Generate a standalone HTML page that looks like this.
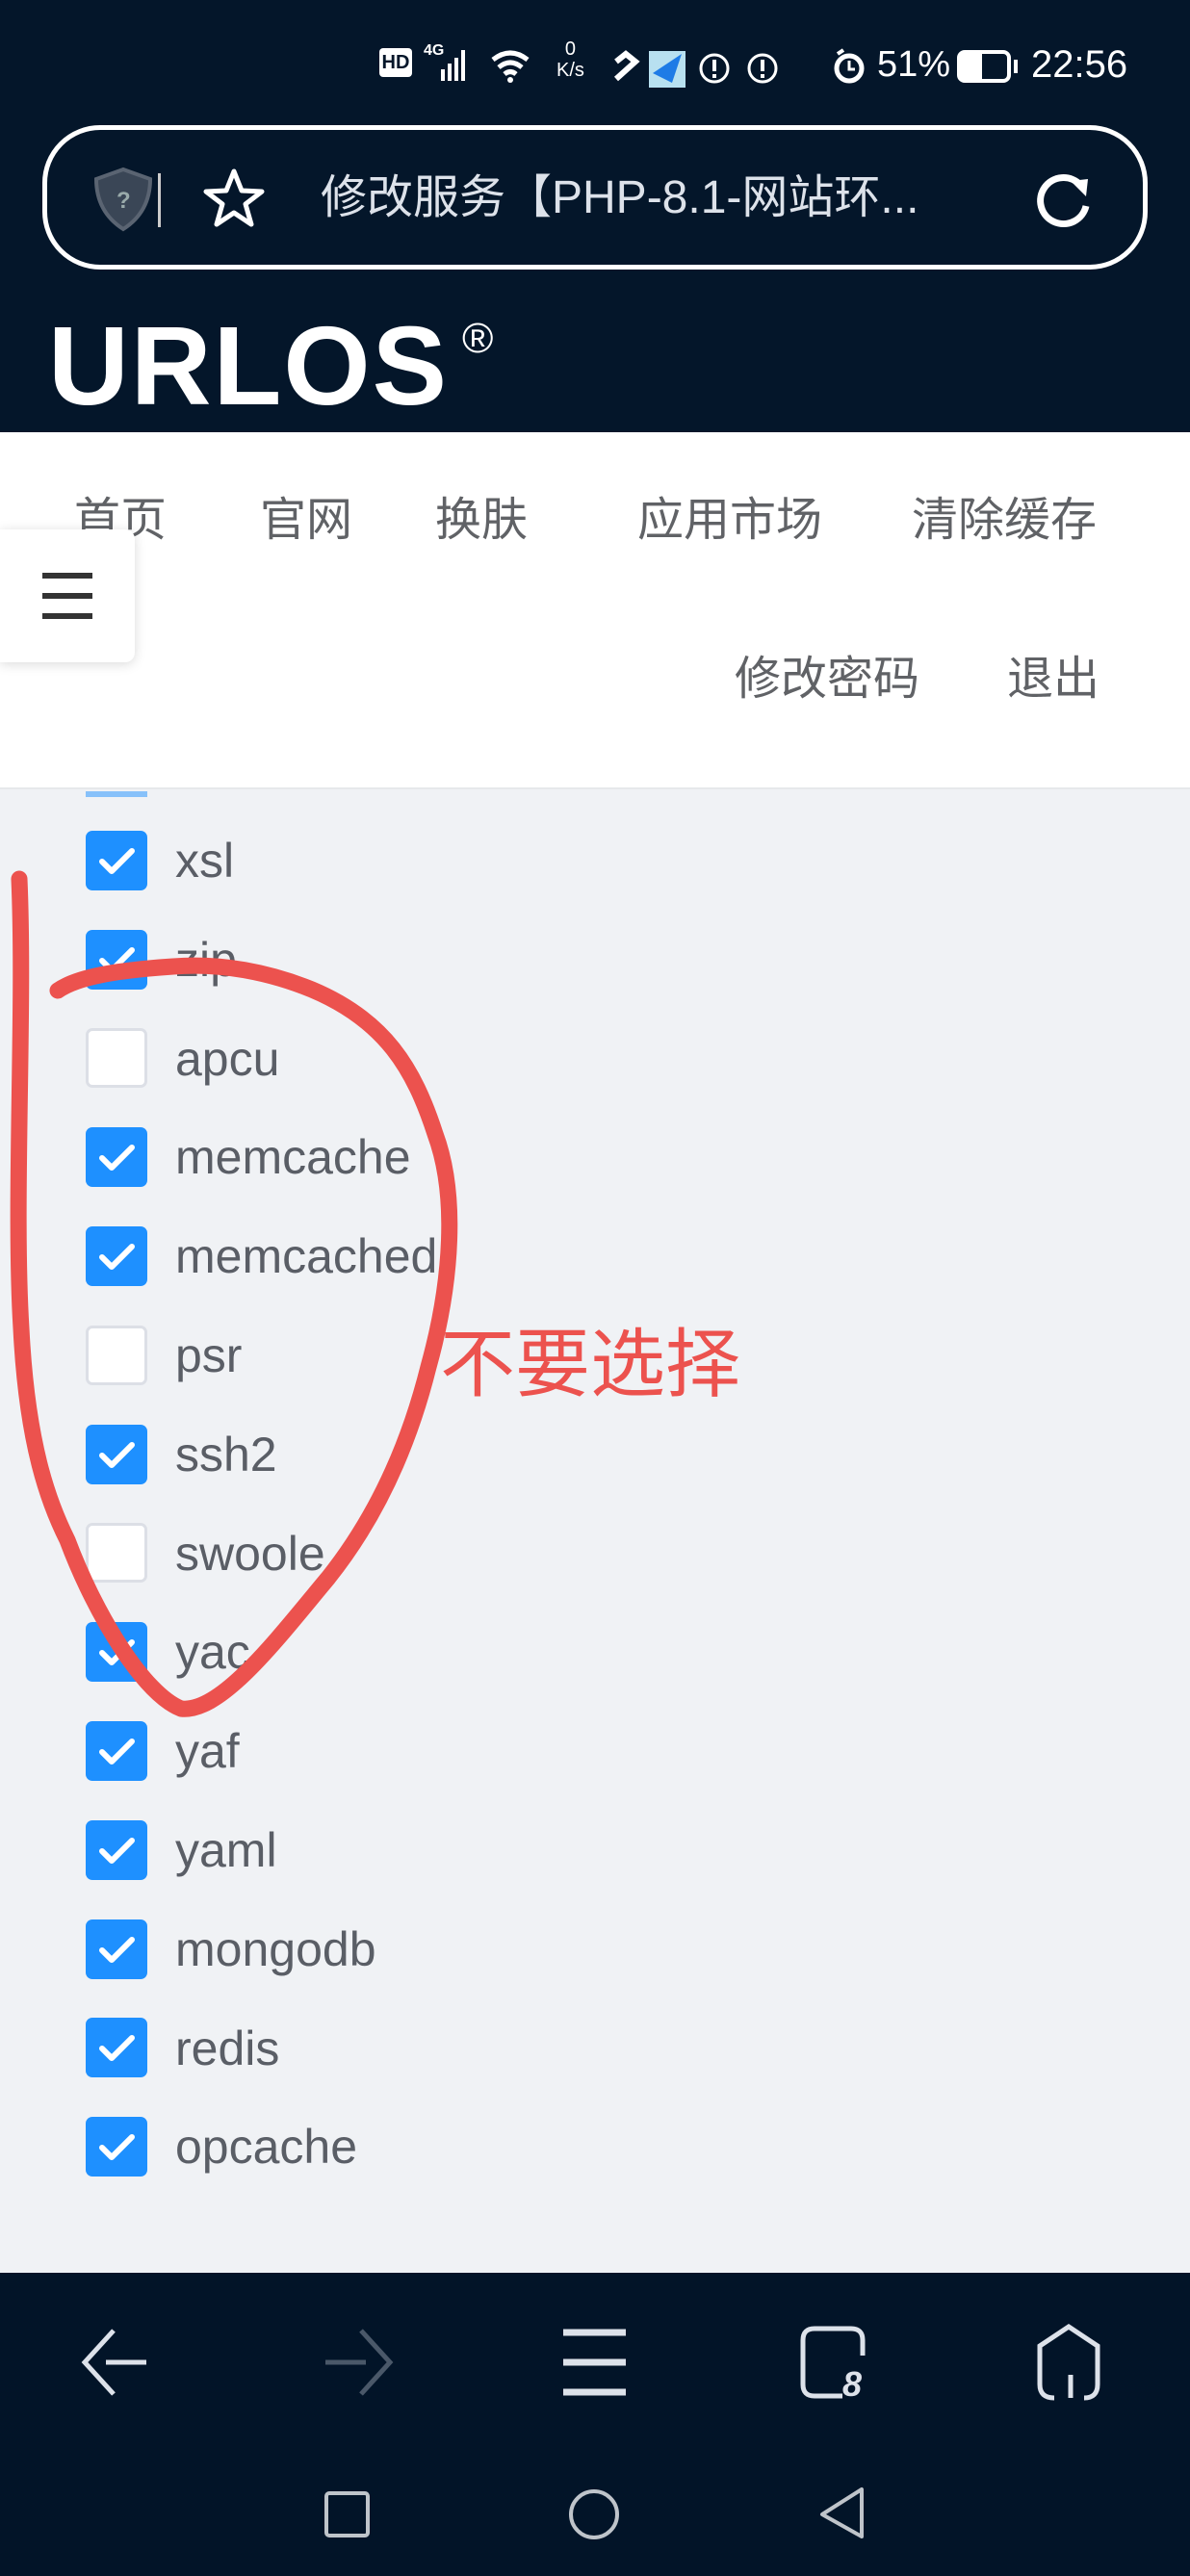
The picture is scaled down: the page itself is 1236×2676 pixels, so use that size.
<!DOCTYPE html>
<html><head><meta charset="utf-8"><style>
*{margin:0;padding:0;box-sizing:border-box}
body{width:1236px;height:2676px;position:relative;overflow:hidden;background:#f0f2f5;font-family:"Liberation Sans","Noto Sans CJK SC",sans-serif}
.abs{position:absolute}
.dark{background:#04162a}
.nav{position:absolute;font-size:48px;color:#606266;line-height:1;white-space:nowrap}
.cb{position:absolute;left:89px;width:64px;height:62px;border-radius:7px;background:#1e90ff}
.cb.off{background:#fff;border:3px solid #dcdfe6}
.lbl{position:absolute;left:182px;font-size:50px;color:#5a5e66;line-height:1}
</style></head><body>
<div class="abs dark" style="left:0;top:0;width:1236px;height:449px"></div>
<!-- status bar -->
<div class="abs" style="left:394px;top:50px;width:34px;height:30px;border-radius:4px;background:#fff;color:#04162a;font-size:20px;font-weight:bold;text-align:center;line-height:30px">HD</div>
<div class="abs" style="left:440px;top:44px;color:#fff;font-size:16px;font-weight:bold">4G</div>
<svg class="abs" style="left:440px;top:40px" width="380" height="60" viewBox="0 0 380 60">
<g fill="#fff"><rect x="18" y="32" width="4" height="12"/><rect x="25" y="26" width="4" height="18"/><rect x="32" y="20" width="4" height="24"/><rect x="39" y="12" width="4" height="32"/></g>
<path d="M72 22 Q90 8 108 22 M78 30 Q90 20 102 30 M84 37 Q90 32 96 37" stroke="#fff" stroke-width="5" fill="none"/>
<circle cx="90" cy="43" r="3" fill="#fff"/>
<path d="M200 24 l10 -8 10 8 -20 18" stroke="#fff" stroke-width="6" fill="none"/>
<rect x="234" y="13" width="38" height="38" fill="#b8e0f0"/><path d="M238 36 L268 16 258 46 Z" fill="#1e7be6"/>
<circle cx="302" cy="31" r="14" stroke="#fff" stroke-width="3" fill="none"/><rect x="300" y="22" width="4" height="12" fill="#fff"/><rect x="300" y="37" width="4" height="4" fill="#fff"/>
<circle cx="352" cy="31" r="14" stroke="#fff" stroke-width="3" fill="none"/><rect x="350" y="22" width="4" height="12" fill="#fff"/><rect x="350" y="37" width="4" height="4" fill="#fff"/>
</svg>
<div class="abs" style="left:578px;top:40px;color:#fff;font-size:20px;line-height:22px;text-align:center">0<br>K/s</div>
<svg class="abs" style="left:862px;top:48px" width="40" height="42"><circle cx="20" cy="23" r="13" stroke="#fff" stroke-width="5" fill="none"/><path d="M20 15v9h6" stroke="#fff" stroke-width="3" fill="none"/><path d="M8 8 l6 -4" stroke="#fff" stroke-width="4"/></svg>
<div class="abs" style="left:911px;top:48px;color:#fff;font-size:38px;line-height:1">51%</div>
<div class="abs" style="left:994px;top:52px;width:56px;height:34px;border:4px solid #fff;border-radius:8px"><div style="width:22px;height:100%;background:#fff"></div></div>
<div class="abs" style="left:1053px;top:62px;width:4px;height:14px;background:#fff"></div>
<div class="abs" style="left:1071px;top:47px;color:#fff;font-size:40px;line-height:1">22:56</div>
<!-- URL bar -->
<div class="abs" style="left:44px;top:130px;width:1148px;height:150px;border:5px solid #fff;border-radius:60px"></div>
<svg class="abs" style="left:90px;top:170px" width="80" height="76"><path d="M38 6 L66 16 Q66 50 38 68 Q10 50 10 16 Z" fill="#3a4656" stroke="#5a6472" stroke-width="4"/><text x="31" y="46" font-size="24" fill="#9aa" font-family="Liberation Sans" font-weight="bold">?</text><rect x="74" y="10" width="3" height="56" fill="#ccc"/></svg>
<svg class="abs" style="left:208px;top:172px" width="70" height="68"><path d="M35 6 L43 26 64 27 47 40 53 61 35 49 17 61 23 40 6 27 27 26 Z" stroke="#fff" stroke-width="5" fill="none" stroke-linejoin="round"/></svg>
<div class="abs" style="left:333px;top:182px;color:#dde2ea;font-size:48px;line-height:1;white-space:nowrap">修改服务【PHP-8.1-网站环...</div>
<svg class="abs" style="left:1070px;top:172px" width="70" height="70"><path d="M52 20 A24 24 0 1 0 58 42" stroke="#fff" stroke-width="7" fill="none"/><path d="M42 16 L60 14 58 32 Z" fill="#fff"/></svg>
<!-- logo -->
<div class="abs" style="left:50px;top:322px;color:#fff;font-size:116px;font-weight:bold;line-height:1;letter-spacing:2px">URLOS</div>
<div class="abs" style="left:480px;top:330px;color:#fff;font-size:44px;line-height:1">®</div>
<!-- white nav -->
<div class="abs" style="left:0;top:449px;width:1236px;height:371px;background:#fff;border-bottom:2px solid #e6e8eb"></div>
<div class="nav" style="left:77px;top:517px">首页</div>
<div class="nav" style="left:270px;top:517px">官网</div>
<div class="nav" style="left:452px;top:517px">换肤</div>
<div class="nav" style="left:662px;top:517px">应用市场</div>
<div class="nav" style="left:947px;top:517px">清除缓存</div>
<div class="nav" style="left:763px;top:682px">修改密码</div>
<div class="nav" style="left:1046px;top:682px">退出</div>
<div class="abs" style="left:0;top:550px;width:140px;height:138px;background:#fff;border-radius:0 10px 10px 0;box-shadow:0 2px 12px rgba(0,0,0,.15)">
<div class="abs" style="left:44px;top:45px;width:52px;height:6px;background:#333"></div>
<div class="abs" style="left:44px;top:66px;width:52px;height:6px;background:#333"></div>
<div class="abs" style="left:44px;top:87px;width:52px;height:6px;background:#333"></div>
</div>
<div class="abs" style="left:89px;top:822px;width:64px;height:6px;background:#1e90ff;opacity:.5"></div>
<!-- list -->
<div class="cb" style="top:863px"></div><div class="lbl" style="top:869px">xsl</div>
<div class="cb" style="top:966px"></div><div class="lbl" style="top:972px">zip</div>
<div class="cb off" style="top:1068px"></div><div class="lbl" style="top:1075px">apcu</div>
<div class="cb" style="top:1171px"></div><div class="lbl" style="top:1177px">memcache</div>
<div class="cb" style="top:1274px"></div><div class="lbl" style="top:1280px">memcached</div>
<div class="cb off" style="top:1377px"></div><div class="lbl" style="top:1383px">psr</div>
<div class="cb" style="top:1480px"></div><div class="lbl" style="top:1486px">ssh2</div>
<div class="cb off" style="top:1582px"></div><div class="lbl" style="top:1589px">swoole</div>
<div class="cb" style="top:1685px"></div><div class="lbl" style="top:1691px">yac</div>
<div class="cb" style="top:1788px"></div><div class="lbl" style="top:1794px">yaf</div>
<div class="cb" style="top:1891px"></div><div class="lbl" style="top:1897px">yaml</div>
<div class="cb" style="top:1994px"></div><div class="lbl" style="top:2000px">mongodb</div>
<div class="cb" style="top:2096px"></div><div class="lbl" style="top:2103px">redis</div>
<div class="cb" style="top:2199px"></div><div class="lbl" style="top:2205px">opcache</div>
<svg class="abs" style="left:0;top:0" width="1236" height="2676">
<g stroke="#fff" stroke-width="6" fill="none" stroke-linecap="round" stroke-linejoin="round">
<path d="M106 895 l10 10 21 -21"/><path d="M106 998 l10 10 21 -21"/><path d="M106 1203 l10 10 21 -21"/><path d="M106 1306 l10 10 21 -21"/><path d="M106 1512 l10 10 21 -21"/><path d="M106 1717 l10 10 21 -21"/><path d="M106 1820 l10 10 21 -21"/><path d="M106 1923 l10 10 21 -21"/><path d="M106 2026 l10 10 21 -21"/><path d="M106 2128 l10 10 21 -21"/><path d="M106 2231 l10 10 21 -21"/>
</g>
<path d="M20 913 C26 1050 14 1250 22 1380 C28 1500 50 1560 70 1600 C100 1680 150 1760 188 1775 C230 1780 290 1700 341 1639 C380 1590 420 1520 445 1420 C470 1330 475 1240 452 1178 C430 1110 400 1060 324 1028 C280 1010 230 1000 180 1004 C120 1008 80 1015 60 1029" stroke="#ec524e" stroke-width="17" fill="none" stroke-linecap="round"/>
</svg>
<div class="abs" style="left:457px;top:1378px;color:#ec524e;font-size:78px;line-height:1;white-space:nowrap">不要选择</div>
<!-- bottom bars -->
<div class="abs" style="left:0;top:2361px;width:1236px;height:315px;background:#021428"></div>
<svg class="abs" style="left:0;top:2361px" width="1236" height="315">
<g stroke="#dde2ea" stroke-width="5" fill="none">
<path d="M118 60 L88 93 118 126 M110 93 H152"/>
<path d="M375 60 L405 93 375 126 M338 93 H380" stroke="#4a5869"/>
<path d="M585 62 H650 M585 93 H650 M585 124 H650" stroke-width="7"/>
<path d="M875 128 H846 Q834 128 834 116 V70 Q834 58 846 58 H884 Q896 58 896 70 V86"/>
<path d="M1112 130 V106 M1095 130 Q1080 130 1080 116 V76 L1110 56 L1140 76 V116 Q1140 130 1126 130"/>
</g>
<text x="875" y="128" font-size="36" font-weight="bold" fill="#dde2ea" font-family="Liberation Sans" font-style="italic">8</text>
<g stroke="#bfc4ca" stroke-width="4" fill="none">
<rect x="339" y="229" width="43" height="44" rx="3"/>
<circle cx="617" cy="251" r="24"/>
<path d="M895 225 V274 L854 251 Z" stroke-linejoin="round"/>
</g>
</svg>
</body></html>
